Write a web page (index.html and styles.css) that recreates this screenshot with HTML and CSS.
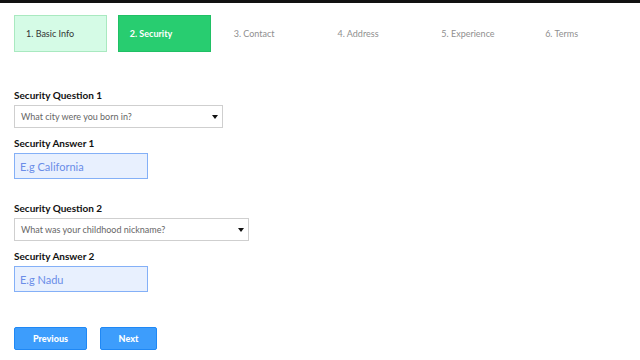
FILE: index.html
```html
<!DOCTYPE html>
<html lang="en">
<head>
    <meta charset="UTF-8">
    <title>Security</title>
    <link rel="stylesheet" href="styles.css">
</head>
<body>
    <div class="topbar"></div>
    <div class="steps">
        <div class="step done">1. Basic Info</div>
        <div class="step current">2. Security</div>
        <div class="step">3. Contact</div>
        <div class="step">4. Address</div>
        <div class="step">5. Experience</div>
        <div class="step">6. Terms</div>
    </div>
    <form class="form">
        <label class="label first">Security Question 1</label>
        <div class="select q1">
            <span>What city were you born in?</span>
            <i class="arrow"></i>
        </div>
        <label class="label">Security Answer 1</label>
        <input class="answer" type="text" placeholder="E.g California">

        <label class="label group">Security Question 2</label>
        <div class="select q2">
            <span>What was your childhood nickname?</span>
            <i class="arrow"></i>
        </div>
        <label class="label">Security Answer 2</label>
        <input class="answer" type="text" placeholder="E.g Nadu">

        <div class="buttons">
            <button type="button" class="btn prev">Previous</button>
            <button type="button" class="btn next">Next</button>
        </div>
    </form>
</body>
</html>
```

FILE: styles.css
```css
*{
    padding: 0;
    margin: 0;
    box-sizing: border-box;
}
body{
    font-family: Lato, "Open Sans", sans-serif;
    background-color: #fff;
    color: #111;
}
.topbar{
    height: 3px;
    background-color: #111;
}
.steps{
    display: flex;
    gap: 11px;
    margin: 12px 14px 0;
}
.step{
    width: 93px;
    height: 37px;
    display: flex;
    align-items: center;
    padding-left: 11px;
    font-size: 9px;
    color: #8f8f8f;
    border: 1px solid transparent;
}
.step.done{
    background-color: #d5fbe6;
    border-color: #a9e9c0;
    color: #333;
}
.step.current{
    background-color: #28cd70;
    border-color: #20c065;
    color: #fff;
    font-weight: bold;
}
.form{
    display: flex;
    flex-direction: column;
    align-items: flex-start;
    padding: 0 14px;
}
.label{
    display: block;
    font-size: 10px;
    font-weight: bold;
    line-height: 14px;
    margin-top: 8px;
    color: #111;
}
.label.first{
    margin-top: 36px;
}
.label.group{
    margin-top: 22px;
}
.select{
    margin-top: 3px;
    height: 23px;
    border: 1px solid #cfcfcf;
    display: flex;
    align-items: center;
    justify-content: space-between;
    padding: 0 4px 0 6px;
    font-size: 9px;
    color: #666;
}
.select.q1{
    width: 209px;
}
.select.q2{
    width: 235px;
}
.arrow{
    width: 0;
    height: 0;
    border-left: 3px solid transparent;
    border-right: 3px solid transparent;
    border-top: 4px solid #111;
}
.answer{
    margin-top: 3px;
    width: 134px;
    height: 26px;
    border: 1px solid #84b0f7;
    background-color: #e8f0fe;
    padding: 0 5px;
    font-family: inherit;
    font-size: 11px;
    outline: none;
}
.answer::placeholder{
    color: #6a8de8;
}
.buttons{
    display: flex;
    gap: 13px;
    margin-top: 35px;
}
.btn{
    height: 23px;
    border: 1px solid #1f88f5;
    border-radius: 2px;
    background-color: #3d9dfc;
    color: #fff;
    font-family: inherit;
    font-size: 9px;
    font-weight: 900;
    cursor: pointer;
}
.btn.prev{
    width: 73px;
}
.btn.next{
    width: 57px;
}
```
